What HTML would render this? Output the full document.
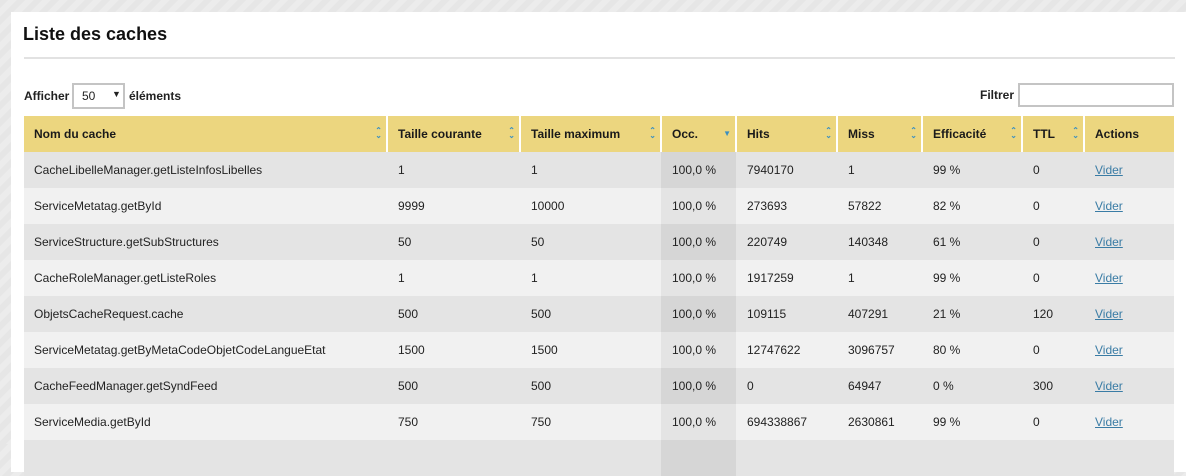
<!DOCTYPE html>
<html><head><meta charset="utf-8"><style>
body{margin:0;width:1186px;height:444px;overflow:hidden;background:repeating-linear-gradient(135deg,#e6e6e6 0 6px,#ececec 6px 12px);font-family:"Liberation Sans",Arial,sans-serif;color:#222;}
.card{position:absolute;left:11px;top:12px;width:1190px;height:460px;background:#fff;}
h1{position:absolute;left:12px;top:12px;margin:0;font-size:18px;font-weight:bold;color:#111;}
.hr{position:absolute;left:13px;top:45px;width:1151px;height:2px;background:#e2e2e2;}
.af{position:absolute;left:13px;top:77px;font-size:12px;font-weight:bold;}
.sel{position:absolute;left:61px;top:71px;width:49px;height:22px;border:2px solid #c4c4c4;font-size:12px;font-weight:normal;}
.sel span{position:absolute;left:8px;top:4px}
.sel i{position:absolute;left:38px;top:4px;font-style:normal;font-size:9px}
.el{position:absolute;left:118px;top:77px;font-size:12px;font-weight:bold}
.fl{position:absolute;left:969px;top:76px;font-size:12px;font-weight:bold}
.fi{position:absolute;left:1007px;top:71px;width:152px;height:20px;border:2px solid #c4c4c4}
table{position:absolute;left:13px;top:104px;border-collapse:collapse;font-size:12px;table-layout:fixed;width:1150px}
th{background:#ecd67f;height:36px;text-align:left;padding:0 0 0 10px;font-weight:bold;border-left:2px solid #fff;position:relative;color:#1a1a1a}
th:first-child{border-left:none}
th .s{position:absolute;right:4px;top:12px;color:#3b8fc0;font-size:8px;line-height:5px}
td{height:36px;padding:0 0 0 10px;border-left:2px solid transparent}
td:first-child{border-left:none}
tr.o td{background:#e4e4e4}tr.e td{background:#f1f1f1}
tr.o td.c{background:#d6d6d6}tr.e td.c{background:#e4e4e4}
a{color:#3a7ca5;text-decoration:underline}
</style></head><body>
<div class="card">
<h1>Liste des caches</h1><div class="hr"></div>
<div class="af">Afficher</div><div class="sel"><span>50</span><i>▼</i></div><div class="el">éléments</div>
<div class="fl">Filtrer</div><div class="fi"></div>
<table>
<colgroup><col style="width:363px"><col style="width:133px"><col style="width:141px"><col style="width:75px"><col style="width:101px"><col style="width:85px"><col style="width:100px"><col style="width:62px"><col style="width:90px"></colgroup>
<tr><th>Nom du cache<span class="s">⌃<br>⌄</span></th><th>Taille courante<span class="s">⌃<br>⌄</span></th><th>Taille maximum<span class="s">⌃<br>⌄</span></th><th>Occ.<span class="s" style="top:15px">▼</span></th><th>Hits<span class="s">⌃<br>⌄</span></th><th>Miss<span class="s">⌃<br>⌄</span></th><th>Efficacité<span class="s">⌃<br>⌄</span></th><th>TTL<span class="s">⌃<br>⌄</span></th><th>Actions</th></tr>
<tr class="o"><td>CacheLibelleManager.getListeInfosLibelles</td><td>1</td><td>1</td><td class="c">100,0 %</td><td>7940170</td><td>1</td><td>99 %</td><td>0</td><td><a>Vider</a></td></tr>
<tr class="e"><td>ServiceMetatag.getById</td><td>9999</td><td>10000</td><td class="c">100,0 %</td><td>273693</td><td>57822</td><td>82 %</td><td>0</td><td><a>Vider</a></td></tr>
<tr class="o"><td>ServiceStructure.getSubStructures</td><td>50</td><td>50</td><td class="c">100,0 %</td><td>220749</td><td>140348</td><td>61 %</td><td>0</td><td><a>Vider</a></td></tr>
<tr class="e"><td>CacheRoleManager.getListeRoles</td><td>1</td><td>1</td><td class="c">100,0 %</td><td>1917259</td><td>1</td><td>99 %</td><td>0</td><td><a>Vider</a></td></tr>
<tr class="o"><td>ObjetsCacheRequest.cache</td><td>500</td><td>500</td><td class="c">100,0 %</td><td>109115</td><td>407291</td><td>21 %</td><td>120</td><td><a>Vider</a></td></tr>
<tr class="e"><td>ServiceMetatag.getByMetaCodeObjetCodeLangueEtat</td><td>1500</td><td>1500</td><td class="c">100,0 %</td><td>12747622</td><td>3096757</td><td>80 %</td><td>0</td><td><a>Vider</a></td></tr>
<tr class="o"><td>CacheFeedManager.getSyndFeed</td><td>500</td><td>500</td><td class="c">100,0 %</td><td>0</td><td>64947</td><td>0 %</td><td>300</td><td><a>Vider</a></td></tr>
<tr class="e"><td>ServiceMedia.getById</td><td>750</td><td>750</td><td class="c">100,0 %</td><td>694338867</td><td>2630861</td><td>99 %</td><td>0</td><td><a>Vider</a></td></tr>
<tr class="o"><td></td><td></td><td></td><td class="c"></td><td></td><td></td><td></td><td></td><td></td></tr>
</table>
</div>
</body></html>
